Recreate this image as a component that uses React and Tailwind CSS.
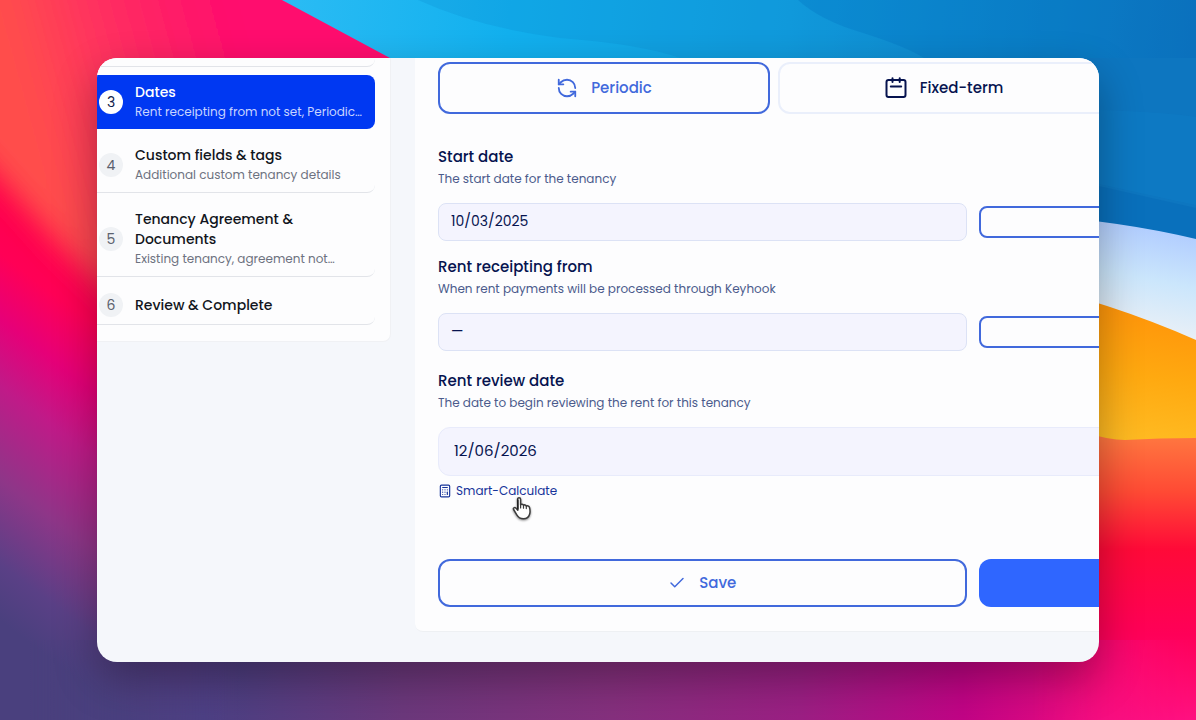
import React from "react";
import { Calculator, Check, RefreshCcw } from "lucide-react";

const steps = [
  { n: 3, title: "Dates", note: "Rent receipting from not set, Periodic…", active: true },
  { n: 4, title: "Custom fields & tags", note: "Additional custom tenancy details" },
  { n: 5, title: "Tenancy Agreement & Documents", note: "Existing tenancy, agreement not…" },
  { n: 6, title: "Review & Complete" },
];

function Wallpaper() {
  return (
    <svg
      className="absolute inset-0 h-full w-full"
      viewBox="0 0 1196 720"
      preserveAspectRatio="none"
      aria-hidden="true"
    >
      <defs>
        <linearGradient id="sky" x1="280" y1="0" x2="1196" y2="120" gradientUnits="userSpaceOnUse">
          <stop offset="0" stopColor="#2bbcf4" />
          <stop offset="0.25" stopColor="#12b0ee" />
          <stop offset="0.55" stopColor="#129fe0" />
          <stop offset="1" stopColor="#0f70bb" />
        </linearGradient>
        <linearGradient id="cloud" x1="1150" y1="225" x2="1130" y2="330" gradientUnits="userSpaceOnUse">
          <stop offset="0" stopColor="#b0ccff" />
          <stop offset="0.5" stopColor="#cbe6fc" />
          <stop offset="1" stopColor="#eaf0f6" />
        </linearGradient>
        <linearGradient id="sun" x1="1150" y1="310" x2="1130" y2="440" gradientUnits="userSpaceOnUse">
          <stop offset="0" stopColor="#ff950a" />
          <stop offset="0.5" stopColor="#ffa910" />
          <stop offset="1" stopColor="#ffbb22" />
        </linearGradient>
        <linearGradient id="ember" x1="0" y1="435" x2="0" y2="720" gradientUnits="userSpaceOnUse">
          <stop offset="0" stopColor="#ff7840" />
          <stop offset="0.2" stopColor="#ff4a34" />
          <stop offset="0.4" stopColor="#ff0a38" />
          <stop offset="0.7" stopColor="#ff0058" />
          <stop offset="1" stopColor="#ff1080" />
        </linearGradient>
        <linearGradient id="dusk" x1="30" y1="0" x2="1196" y2="0" gradientUnits="userSpaceOnUse">
          <stop offset="0" stopColor="#4a3f7e" />
          <stop offset="0.15" stopColor="#4a4084" />
          <stop offset="0.32" stopColor="#6c387c" />
          <stop offset="0.5" stopColor="#86307e" />
          <stop offset="0.66" stopColor="#9c1f84" />
          <stop offset="0.8" stopColor="#c20486" />
          <stop offset="0.92" stopColor="#ee0c80" />
          <stop offset="1" stopColor="#ff1080" />
        </linearGradient>
        <linearGradient id="fade" x1="30" y1="0" x2="1196" y2="0" gradientUnits="userSpaceOnUse">
          <stop offset="0" stopColor="#fff" stopOpacity="0" />
          <stop offset="0.18" stopColor="#fff" />
          <stop offset="0.86" stopColor="#fff" />
          <stop offset="1" stopColor="#fff" stopOpacity="0" />
        </linearGradient>
        <mask id="strip" maskUnits="userSpaceOnUse" x="0" y="640" width="1196" height="80">
          <rect y="640" width="1196" height="80" fill="url(#fade)" />
        </mask>
        <linearGradient id="rose" x1="20" y1="70" x2="240" y2="10" gradientUnits="userSpaceOnUse">
          <stop offset="0" stopColor="#ff4e4c" />
          <stop offset="0.4" stopColor="#ff3060" />
          <stop offset="1" stopColor="#ff0a6e" />
        </linearGradient>
        <linearGradient id="fall" x1="0" y1="150" x2="-226" y2="451" gradientUnits="userSpaceOnUse">
          <stop offset="0" stopColor="#ff0044" />
          <stop offset="0.22" stopColor="#ff0056" />
          <stop offset="0.36" stopColor="#e60078" />
          <stop offset="0.5" stopColor="#c01a88" />
          <stop offset="0.7" stopColor="#8e3688" />
          <stop offset="0.88" stopColor="#5a4086" />
          <stop offset="1" stopColor="#4a407e" />
        </linearGradient>
        <filter id="soft" x="-200" y="-200" width="1600" height="1200" filterUnits="userSpaceOnUse">
          <feGaussianBlur stdDeviation="14" />
        </filter>
      </defs>
      <rect width="1196" height="720" fill="url(#fall)" />
      <path d="M-80 -80H300L560 140L260 440L60 246L-80 90Z" fill="url(#rose)" filter="url(#soft)" />
      <path d="M282 0L390 58L560 150H1196V0Z" fill="url(#sky)" />
      <path d="M418 0Q480 28 560 38Q640 44 680 58H1100V0Z" fill="#0b84c8" opacity="0.2" />
      <path d="M798 0Q820 20 860 32Q905 46 924 58H1196V0Z" fill="#0070c0" opacity="0.3" />
      <path d="M1000 58H1196V240L1000 225Z" fill="#0d76c0" />
      <path d="M1090 110Q1150 111 1196 117V205L1090 182Z" fill="#0f80c8" opacity="0.4" />
      <path d="M1090 184L1196 208V240H1090Z" fill="#0060ae" opacity="0.25" />
      <path d="M1000 212Q1120 220 1196 239V360H1000Z" fill="url(#cloud)" />
      <path d="M1000 278Q1100 298 1196 340V460H1000Z" fill="url(#sun)" />
      <path d="M1000 400Q1090 440 1125 440Q1160 438 1196 438V720H1000Z" fill="url(#ember)" />
      <rect y="640" width="1196" height="80" fill="url(#dusk)" mask="url(#strip)" />
    </svg>
  );
}

function CalendarIcon() {
  return (
    <svg width="22" height="22" viewBox="0 0 22 22" fill="none" stroke="currentColor" strokeWidth="2" strokeLinecap="round" aria-hidden="true">
      <rect x="1.5" y="3" width="19" height="17" rx="2" />
      <path d="M7.5 1.2V5M14.7 1.2V5M5.8 9.5H16.2" />
    </svg>
  );
}

function HandCursor() {
  return (
    <svg
      className="pointer-events-none absolute left-[74px] top-[14px] drop-shadow-[0_1px_1px_rgba(0,0,0,0.45)]"
      width="20"
      height="25"
      viewBox="0 0 20 25"
      aria-hidden="true"
    >
      <path
        d="M5.6 3.2C5.6 1.3 8.5 1.3 8.6 3.2V9C9 7.9 11.2 8 11.5 9.4C12.2 8.5 14 8.8 14.3 10.2C15.1 9.5 17.1 9.9 17.5 11.5C18.1 13.7 18.4 15.8 17.6 18.3C16.7 21.4 14.4 22.8 11.5 22.8C8.3 22.8 6.3 21.5 4.8 18.9L1.6 13.5C.8 12 2.6 10.9 3.8 12L5.8 14.2Z"
        fill="#fff"
        stroke="#3c3c3c"
        strokeWidth="1.5"
        strokeLinejoin="round"
      />
      <path d="M5.8 4V13" stroke="#222" strokeWidth="1.6" strokeLinecap="round" />
      <path d="M8.6 9V12M11.5 9.6V12.2M14.3 10.4V12.6" stroke="#3c3c3c" strokeWidth="1.2" strokeLinecap="round" />
    </svg>
  );
}

function Step({ n, title, note, active }) {
  return (
    <li>
      <button
        type="button"
        aria-current={active ? "step" : undefined}
        className={
          "flex w-full items-center gap-3 rounded-r-lg py-[7px] pl-[2px] pr-3 text-left " +
          (active ? "bg-[#0038f2]" : "border-b border-[#e2e4e9]")
        }
      >
        <span
          className={
            "flex size-6 shrink-0 items-center justify-center rounded-full text-sm " +
            (active ? "bg-white text-[#10194a]" : "bg-[#f0f2f5] text-[#5b616e]")
          }
        >
          {n}
        </span>
        <span className="flex min-w-0 flex-col">
          <span className={"text-sm leading-5 font-medium " + (active ? "text-white" : "text-[#111520]")}>{title}</span>
          {note && (
            <span className={"truncate text-xs leading-5 " + (active ? "text-[#c8d4ff]" : "text-[#6d7280]")}>{note}</span>
          )}
        </span>
      </button>
    </li>
  );
}

function FieldLabel({ id, label, hint }) {
  return (
    <div className="mb-[14px] flex flex-col">
      <label htmlFor={id} className="text-[15px] leading-6 font-medium text-[#06134f]">{label}</label>
      <span className="text-xs leading-5 text-[#4b5b8c]">{hint}</span>
    </div>
  );
}

function DateRow({ id, label, hint, value }) {
  return (
    <div>
      <FieldLabel id={id} label={label} hint={hint} />
      <div className="grid grid-cols-2 items-center gap-3">
        <input
          id={id}
          defaultValue={value}
          className="h-[38px] min-w-0 rounded-lg border border-[#dce2f5] bg-[#f4f4fe] px-3 pb-[2px] text-sm text-[#06134f] outline-none"
        />
        <button
          type="button"
          aria-label={"Edit " + label.toLowerCase()}
          className="h-8 rounded-lg border-2 border-[#4169dc] bg-[#fdfdfe]"
        />
      </div>
    </div>
  );
}

export default function App() {
  return (
    <div className="relative isolate min-h-screen overflow-hidden px-[97px] py-[58px] font-['Poppins','Inter',sans-serif]">
      <Wallpaper />
      <div className="relative flex items-start overflow-hidden rounded-[20px] bg-[#f5f7fb] pb-[30px] shadow-[0_18px_44px_rgba(0,0,0,0.32)]">
        <nav aria-label="Tenancy steps" className="w-[294px] shrink-0 rounded-br-lg border-b border-r border-[#f0f1f4] bg-[#fdfdfe] pb-4 pr-[15px]">
          <div className="mb-2 h-[9px] rounded-br-lg border-b border-[#e2e4e9]" />
          <ol className="flex flex-col gap-[9px]">
            {steps.map((s) => (
              <Step key={s.n} {...s} />
            ))}
          </ol>
        </nav>

        <main className="ml-6 min-w-[1116px] flex-1 rounded-b-lg border-b border-[#eef0f3] bg-[#fdfdfe] pb-6 pl-[23px] pr-6 pt-1">
          <div className="flex gap-2">
            <button type="button" aria-pressed="true" className="flex h-[52px] w-[332px] items-center justify-center gap-[13px] rounded-xl border-2 border-[#4169dc] text-[15px] font-medium text-[#4169dc]">
              <RefreshCcw size={22} strokeWidth={2} />
              Periodic
            </button>
            <button type="button" aria-pressed="false" className="flex h-[52px] w-[332px] items-center justify-center gap-[13px] rounded-xl border-2 border-[#eaeffb] text-[15px] font-medium text-[#06134f]">
              <CalendarIcon />
              Fixed-term
            </button>
          </div>

          <form className="mt-[31px] flex flex-col" onSubmit={(e) => e.preventDefault()}>
            <div className="flex flex-col gap-[14px]">
              <DateRow id="start" label="Start date" hint="The start date for the tenancy" value="10/03/2025" />
              <DateRow id="receipting" label="Rent receipting from" hint="When rent payments will be processed through Keyhook" value="—" />
            </div>
            <div className="mt-[18px]">
              <FieldLabel id="review" label="Rent review date" hint="The date to begin reviewing the rent for this tenancy" />
              <input
                id="review"
                defaultValue="12/06/2026"
                className="h-[49px] w-full rounded-xl border border-[#e8ebfb] bg-[#f4f4fe] px-[15px] pb-[2px] text-[15px] text-[#06134f] outline-none"
              />
              <button type="button" className="relative mt-[6px] flex h-[18px] items-center gap-1 text-xs text-[#17349a]">
                <Calculator size={14} strokeWidth={2} />
                Smart-Calculate
                <HandCursor />
              </button>
            </div>
            <div className="mt-[59px] grid grid-cols-2 gap-3">
              <button type="submit" className="flex h-12 items-center justify-center gap-[13px] rounded-xl border-2 border-[#4169dc] text-[15px] font-medium text-[#4169dc]">
                <Check size={18} strokeWidth={2} />
                Save
              </button>
              <button type="button" aria-label="Next step" className="h-12 rounded-xl bg-[#2f66ff]" />
            </div>
          </form>
        </main>
      </div>
    </div>
  );
}
